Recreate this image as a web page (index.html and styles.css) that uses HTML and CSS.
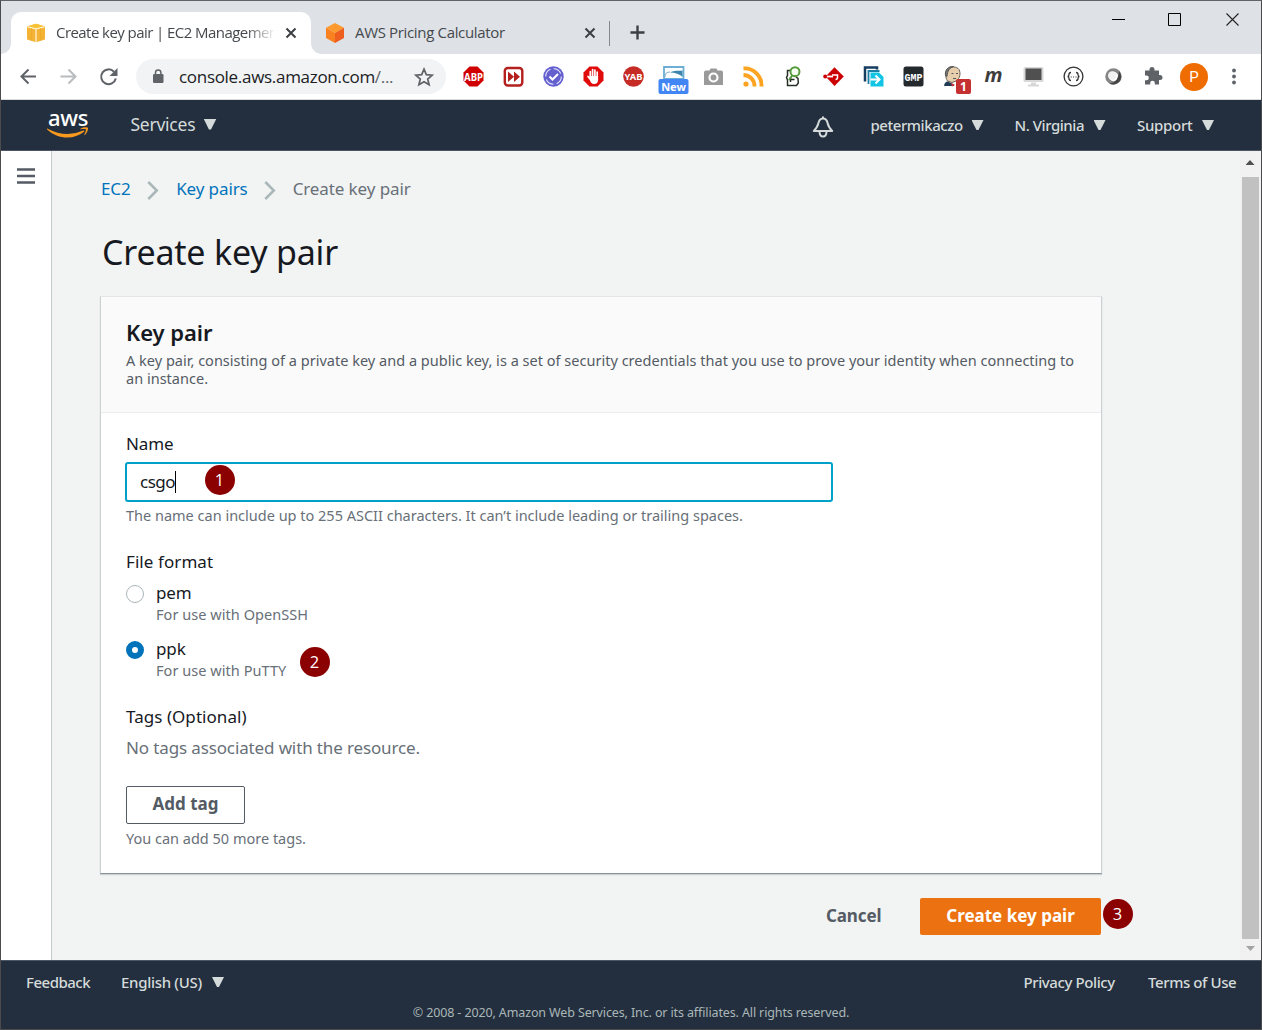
FILE: index.html
```html
<!DOCTYPE html>
<html lang="en">
<head>
<meta charset="utf-8">
<title>Create key pair | EC2 Management Console</title>
<link rel="stylesheet" href="styles.css">
</head>
<body>
<div class="window">
  <header class="tabstrip">
    <div class="tab tab-active">
      <svg class="favicon" viewBox="0 0 20 20"><path d="M1 3.500 10 .8l9 2.700v13L10 19.200l-9-2.700z" fill="#f5b335"/><path d="M1 3.500 10 .8l9 2.700-9 2.200z" fill="#f7c234"/><path d="M1.500 3.800 10 5.900l8.500-2.100M10 6v13" stroke="#fff2cf" stroke-width="1.300" fill="none"/><path d="M5.500 5.200v12.500M14.500 5.200v12.500" stroke="#eeaa29" stroke-width=".8"/></svg>
      <span class="tab-title fade">Create key pair | EC2 Management</span>
      <svg class="close" viewBox="0 0 12 12"><path d="m1.500 1.500 9 9m0-9-9 9" stroke="#3c4043" stroke-width="2"/></svg>
    </div>
    <div class="tab">
      <svg class="favicon" viewBox="0 0 20 20"><path d="m10 0 9 4.800-9 5.200L1 4.800z" fill="#ff9a2e"/><path d="m1 4.800 9 5.200v10l-9-5z" fill="#f98120"/><path d="m19 4.800-9 5.200v10l9-5z" fill="#ed5e1f"/></svg>
      <span class="tab-title">AWS Pricing Calculator</span>
      <svg class="close" viewBox="0 0 12 12"><path d="m1.500 1.500 9 9m0-9-9 9" stroke="#3c4043" stroke-width="2"/></svg>
    </div>
    <span class="tab-divider"></span>
    <svg class="new-tab" viewBox="0 0 16 16"><path d="M8 .5v15M.5 8h15" stroke="#3c4043" stroke-width="2.500"/></svg>
    <svg class="window-controls" viewBox="0 0 140 20"><path d="M5 9.500h13" stroke="#000"/><path d="M61.500 3.500h12v12h-12z" fill="none" stroke="#000"/><path d="m119.500 3.500 12 12m0-12-12 12" stroke="#222" stroke-width="1.100"/></svg>
  </header>

  <div class="toolbar">
    <svg class="nav-icons" viewBox="0 0 120 44"><g fill="none" stroke-width="2"><path d="M35 21.500H20.500m7-7-7 7 7 7" stroke="#5f6368"/><path d="M59.500 21.500h15m-7-7 7 7-7 7" stroke="#b9bbbe"/><path d="M113 16.700A7.400 7.400 0 1 0 114.800 23.500" stroke="#5f6368"/></g><path d="M116.500 13v8h-8z" fill="#5f6368"/></svg>
    <div class="omnibox">
      <svg class="lock" viewBox="0 0 12 15"><rect x="1" y="5" width="10.500" height="9" rx="1.200" fill="#5f6368"/><path d="M3.500 6V3.800a2.700 2.700 0 0 1 5.400 0V6" fill="none" stroke="#5f6368" stroke-width="1.500"/></svg>
      <span class="url">console.aws.amazon.com<span>/...</span></span>
      <svg class="star" viewBox="0 0 20 20"><path d="m10 2.200 2.300 5.400 5.900.5-4.500 3.900 1.400 5.800-5.100-3.100-5.100 3.100L6.300 12 1.800 8.100l5.900-.5z" fill="none" stroke="#5f6368" stroke-width="1.700"/></svg>
    </div>
    <div class="extensions">
      <svg viewBox="0 0 40 44"><path d="M16.500 11.500h8l6 6v8l-6 6h-8l-6-6v-8z" fill="#d00000"/><text x="20.500" y="25.500" class="x-bold" font-size="10.500" textLength="19" lengthAdjust="spacingAndGlyphs" fill="#fff">ABP</text></svg>
      <svg viewBox="0 0 40 44"><rect x="11.800" y="13" width="17.500" height="17.500" rx="3" fill="#fff" stroke="#b3201d" stroke-width="2.400"/><path d="m15 16.500 6 5.200-6 5.300zM21 16.500l6 5.200-6 5.300z" fill="#b3201d"/></svg>
      <svg viewBox="0 0 40 44"><circle cx="20.500" cy="21.500" r="10.200" fill="#6461cf"/><circle cx="20.500" cy="21.500" r="7.800" fill="none" stroke="#e5e4ff" stroke-width="1.100" stroke-dasharray="9 3.200"/><path d="m16.500 21.500 3 3 5.500-5.500" fill="none" stroke="#fff" stroke-width="2"/></svg>
      <svg viewBox="0 0 40 44"><path d="M16.500 11.500h8l6 6v8l-6 6h-8l-6-6v-8z" fill="#e00b0b"/><path d="M17.300 22v-5.500m2.300 5v-7m2.300 7v-6.500m2.300 7.500v-5.500M16.500 23.500l-1.500-2" stroke="#fff" stroke-width="1.700" stroke-linecap="round"/><path d="M16.400 21h8.700v3.500c0 3-1.500 4.500-4 4.500s-3.500-1.500-4.700-5z" fill="#fff"/></svg>
      <svg viewBox="0 0 40 44"><circle cx="20.500" cy="21.500" r="10.300" fill="#c62c25"/><text x="20.500" y="25" class="x-bold" font-size="9" textLength="18" lengthAdjust="spacingAndGlyphs" fill="#fff">YAB</text></svg>
      <svg viewBox="0 0 40 44"><path d="M11 12h19.500v12H11z" fill="#fff" stroke="#6caed5" stroke-width="1.800"/><path d="M17 17.500c4-2.500 9-1.500 12.500-2V22c-3-3-7-4.500-12.500-4.500z" fill="#3d86ae"/><path d="M12 22c0-4 2-5 5-5" fill="none" stroke="#8fb9cf" stroke-width="1.200"/><rect x="5.500" y="24" width="30" height="15" rx="2" fill="#4285f4"/><text x="20.500" y="35.800" class="x-bold" font-size="11" fill="#fff">New</text></svg>
      <svg viewBox="0 0 40 44"><path d="M13 15.500h3.500l1-2h6l1 2H28q2 0 2 2V30H11V17.500q0-2 2-2z" fill="#9a9a9a"/><circle cx="20.500" cy="22.500" r="4" fill="#9a9a9a" stroke="#fff" stroke-width="2.200"/></svg>
      <svg viewBox="0 0 40 44"><g fill="none" stroke="#fea31f" stroke-width="3.800"><path d="M10.500 20a11 11 0 0 1 11 11.500M10.500 13.500A17 17 0 0 1 28.500 31.500"/></g><circle cx="13" cy="29" r="2.600" fill="#fea31f"/></svg>
      <svg viewBox="0 0 40 44"><path d="M18 15.500h-3.500v5l-1 2 1 2.500v5.500h9l1.800-2.500-.3-4.500-2-1.500M17.500 22v5m0-2.500h4" fill="none" stroke="#263026" stroke-width="1.500"/><circle cx="22" cy="16.700" r="4.500" fill="#f4fff0" stroke="#53993a" stroke-width="1.900"/><path d="m19.500 20-3.500 5" stroke="#53993a" stroke-width="1.800"/></svg>
      <svg viewBox="0 0 40 44"><path d="m21.500 12.200 9.300 9.300-9.300 9.500-7.500-8v-3z" fill="#cc0000"/><circle cx="12.200" cy="21.500" r="2" fill="#cc0000"/><path d="M14 21.500h6" stroke="#fff" stroke-width="1.800"/><path d="M19 20h5.500v2.500q0 2-2 2" stroke="#fff" stroke-width="1.500" fill="none"/></svg>
      <svg viewBox="0 0 40 44"><path d="M12 26.500V12.500h12v2" fill="none" stroke="#153d60" stroke-width="2.500"/><path d="M15.500 29V16h11" fill="none" stroke="#1b7fa5" stroke-width="1.800"/><path d="M17.500 17.500h8.500l4.500 4.500v9.500h-13z" fill="#12c5e5"/><path d="M17.500 24.500h9m-4-4 4 4-4 4" fill="none" stroke="#fff" stroke-width="2"/></svg>
      <svg viewBox="0 0 40 44"><rect x="10.500" y="11.500" width="20" height="20" rx="2.500" fill="#24292e"/><text x="20.500" y="25.500" class="x-mono" font-size="11" textLength="18" lengthAdjust="spacingAndGlyphs" fill="#fff">GMP</text></svg>
      <svg viewBox="0 0 40 44"><path d="M14.500 26c-2-3-3-9 0-12 3.500-3 9.500-2.500 11.500.5 2 4 1 9-3 11.500l-4 1.500z" fill="#e7cfad" stroke="#6b6259" stroke-width="1"/><path d="M12.500 20.500c-1-5.500 3-9.500 8-9-4 1.500-6 4-6.500 10zM18.500 18.500h2m2.500 0h2M20 23.500h3" fill="#777" stroke="#555"/><path d="M11 31q.5-4.500 4-4.500l6 3V31z" fill="#253c59"/><path d="m18 28 4 2-3 1.500z" fill="#d33131"/><rect x="23" y="24" width="15" height="15" rx="2" fill="#c53030"/><text x="30.500" y="36" class="x-bold" font-size="12" fill="#fff">1</text></svg>
      <svg viewBox="0 0 40 44"><text x="20.500" y="26.800" class="x-bold x-italic" font-size="20" textLength="18" lengthAdjust="spacingAndGlyphs" fill="#3d3d3d">m</text></svg>
      <svg viewBox="0 0 40 44"><rect x="10.500" y="12" width="20" height="15" rx="1.500" fill="#d8d8d8"/><rect x="12.500" y="13.500" width="16" height="11.500" fill="#505050"/><path d="M18 27.500h5v2h3v2H15v-2h3z" fill="#d7d7d7"/></svg>
      <svg viewBox="0 0 40 44"><circle cx="20.500" cy="21.500" r="9.400" fill="none" stroke="#333" stroke-width="1.300"/><path d="M18 17.500q-2 0-2 2t-1.500 2q1.500 0 1.500 2t2 2m5-8q2 0 2 2t1.500 2q-1.500 0-1.500 2t-2 2" fill="none" stroke="#333" stroke-width="1.300"/><path d="M17.700 22h1m1.400 0h1m1.400 0h1" stroke="#333" stroke-width="1.100"/></svg>
      <svg viewBox="0 0 40 44"><circle cx="20.500" cy="21.500" r="6.500" fill="#fff" stroke="#858585" stroke-width="3.500"/><path d="M26 16a8 8 0 0 1-10 12.300q9 .5 10-12.300z" fill="#444"/><circle cx="19.300" cy="20.500" r="4.300" fill="#f2f2f2"/></svg>
      <svg viewBox="0 0 40 44"><path d="M12 15.500h4.500v-1a2.500 2.500 0 0 1 5 0v1H26V20h1a2.500 2.500 0 0 1 0 5h-1v4.500h-4.200V28a2.300 2.300 0 0 0-4.600 0v1.500H12v-4.300h1.500a2.300 2.300 0 0 0 0-4.600H12z" fill="#5f6368"/></svg>
    </div>
    <span class="avatar">P</span>
    <svg class="kebab" viewBox="0 0 4 18"><g fill="#5f6368"><circle cx="2" cy="2.500" r="1.900"/><circle cx="2" cy="8.500" r="1.900"/><circle cx="2" cy="14.500" r="1.900"/></g></svg>
  </div>

  <nav class="aws-nav">
    <div class="logo">
      <span>aws</span>
      <svg viewBox="0 0 42 12"><path d="M.3 1.500q18.500 10 36 2.100c1-.3 1.500.5.700 1.200C26.500 13.500 10 12 .1 2.500-.3 2 0 1.300.3 1.500z" fill="#f7981f"/><path d="M33.500 1.800c3-2.200 7-1.500 7.400-1 .7 1-.8 5.500-3 7.200-.5.400-.9 0-.5-.6 1.300-3 1.800-4.600 1.300-5.100-.5-.6-3.300-.2-4.800 0-.6 0-.7-.3-.4-.5z" fill="#f7981f"/></svg>
    </div>
    <span class="menu services">Services <i class="caret"></i></span>
    <svg class="bell" viewBox="0 0 22 22"><path d="M11 2.500V.5M11 2.500c3 0 4.200 2.300 4.800 5.200.6 3 2.200 4.800 4.400 7.300H1.800C4 12.500 5.600 10.700 6.200 7.700 6.800 4.800 8 2.500 11 2.500z" fill="none" stroke="#d5dbdb" stroke-width="2" stroke-linejoin="round"/><path d="M7.500 15.500q0 5 3.500 5t3.500-5" fill="none" stroke="#d5dbdb" stroke-width="2"/></svg>
    <span class="menu user">petermikaczo <i class="caret"></i></span>
    <span class="menu region">N. Virginia <i class="caret"></i></span>
    <span class="menu support">Support <i class="caret"></i></span>
  </nav>

  <div class="workspace">
    <aside class="rail"><svg viewBox="0 0 18 16"><path d="M0 1.500h18M0 8h18M0 14.500h18" stroke="#545b64" stroke-width="2.400"/></svg></aside>
    <main class="content">
      <div class="breadcrumb">
        <a class="bc-ec2">EC2</a>
        <svg class="chev" viewBox="0 0 12 19"><path d="m1.300 1 8.500 8.500L1.300 18" fill="none" stroke="#aab7b8" stroke-width="2.500"/></svg>
        <a class="bc-pairs">Key pairs</a>
        <svg class="chev" viewBox="0 0 12 19"><path d="m1.300 1 8.500 8.500L1.300 18" fill="none" stroke="#aab7b8" stroke-width="2.500"/></svg>
        <span>Create key pair</span>
      </div>
      <h1>Create key pair</h1>
      <section class="card">
        <header class="card-head">
          <h2>Key pair</h2>
          <p>A key pair, consisting of a private key and a public key, is a set of security credentials that you use to prove your identity when connecting to<br>an instance.</p>
        </header>
        <div class="card-body">
          <div class="label">Name</div>
          <div class="input"><span class="typed">csgo</span><span class="step step-1">1</span></div>
          <div class="hint name-hint">The name can include up to 255 ASCII characters. It can’t include leading or trailing spaces.</div>
          <div class="label format-label">File format</div>
          <div class="option">
            <span class="radio"></span>
            <div><div class="label">pem</div><div class="hint ssh">For use with OpenSSH</div></div>
          </div>
          <div class="option">
            <span class="radio checked"></span>
            <div><div class="label">ppk</div><div class="hint putty">For use with PuTTY</div></div>
            <span class="step step-2">2</span>
          </div>
          <div class="label tags-label">Tags (Optional)</div>
          <div class="empty">No tags associated with the resource.</div>
          <div class="button add">Add tag</div>
          <div class="hint more">You can add 50 more tags.</div>
        </div>
      </section>
      <div class="actions">
        <span class="cancel">Cancel</span>
        <div class="button primary">Create key pair<span class="step step-3">3</span></div>
      </div>
    </main>
    <div class="scrollbar"><i class="arrow up"></i><i class="thumb"></i><i class="arrow down"></i></div>
  </div>

  <footer class="footer">
    <div class="foot-row">
      <span class="feedback">Feedback</span>
      <span class="menu lang">English (US) <i class="caret"></i></span>
      <span class="privacy">Privacy Policy</span>
      <span class="terms">Terms of Use</span>
    </div>
    <div class="copyright">© 2008 - 2020, Amazon Web Services, Inc. or its affiliates. All rights reserved.</div>
  </footer>
</div>
</body>
</html>
```
FILE: styles.css
```css
* { box-sizing: border-box; }
body { margin: 0; font-family: "Noto Sans", sans-serif; color: #16191f; }
svg { display: block; flex: none; }
h1, h2, p { margin: 0; }
.window { width: 1262px; height: 1030px; border: 1px solid #4b4b4d; border-top-color: #626367; display: flex; flex-direction: column; overflow: hidden; white-space: nowrap; }

.tabstrip { height: 53px; background: #dee1e6; display: flex; padding: 11px 0 0 10px; flex: none; }
.tab { height: 42px; width: 300px; display: flex; align-items: center; padding-left: 15px; flex: none; }
.tab-active { background: #fff; border-radius: 10px 10px 0 0; position: relative; }
.tab-active::before, .tab-active::after { content: ""; position: absolute; bottom: 0; width: 10px; height: 10px; }
.tab-active::before { left: -10px; background: radial-gradient(circle at 0 0, transparent 9.5px, #fff 10px); }
.tab-active::after { right: -10px; background: radial-gradient(circle at 100% 0, transparent 9.5px, #fff 10px); }
.favicon { width: 20px; height: 20px; margin-right: 10px; }
.tab-title { font-family: "Open Sans", sans-serif; font-size: 15px; line-height: 20px; letter-spacing: -.34px; width: 218px; overflow: hidden; color: #45494d; margin-top: -2px; }
.tab:not(.tab-active) { width: 298px; padding-left: 14px; }
.tab:not(.tab-active) .tab-title { width: 219px; margin-right: 10px; }
.fade { letter-spacing: -.56px; margin-right: 11px; -webkit-mask-image: linear-gradient(90deg, #000 190px, transparent 220px); mask-image: linear-gradient(90deg, #000 190px, transparent 220px); }
.close { width: 12px; height: 12px; }
.tab-divider { width: 1px; height: 25px; background: #85888c; margin: 9px 20px 0 0; }
.new-tab { width: 15px; height: 15px; margin-top: 13px; }
.window-controls { width: 140px; height: 20px; margin-left: 462px; margin-top: -2px; }

.toolbar { height: 46px; background: #fff; border-bottom: 1px solid #d9dadb; display: flex; align-items: center; flex: none; }
.nav-icons { width: 120px; height: 44px; }
.omnibox { width: 310px; height: 35px; border-radius: 18px; background: #f1f3f4; margin-left: 15px; padding-left: 16px; display: flex; align-items: center; }
.lock { width: 12px; height: 15px; }
.url { font-family: "Open Sans", sans-serif; font-size: 17px; letter-spacing: -.3px; margin-left: 15px; width: 235px; color: #202124; }
.url span { color: #5f6368; }
.star { width: 20px; height: 20px; }
.extensions { display: flex; margin-left: 7px; }
.extensions svg { width: 40px; height: 44px; }
.extensions text { text-anchor: middle; }
.x-bold { font-family: "Noto Sans", sans-serif; font-weight: 700; }
.x-mono { font-family: "Liberation Mono", monospace; font-weight: 700; }
.x-italic { font-style: italic; }
.avatar { width: 28px; height: 28px; border-radius: 50%; background: #ef6c00; color: #fff; font: 15px/28px Roboto, sans-serif; text-align: center; margin-left: 7px; }
.kebab { width: 4px; height: 18px; margin-left: 23.5px; }

.aws-nav { height: 51px; background: #232f3e; border-bottom: 1px solid #4b5563; display: flex; align-items: center; color: #d5dbdb; flex: none; }
.logo { width: 42px; margin-left: 46px; height: 28px; color: #fff; }
.logo span { display: block; font-size: 22px; line-height: 18px; height: 16px; text-align: center; font-weight: 500; letter-spacing: -.3px; margin-top: -3px; }
.logo svg { width: 42px; height: 12px; margin-top: 3px; }
.menu { display: flex; align-items: center; justify-content: space-between; font-size: 15px; font-weight: 500; letter-spacing: -.45px; flex: none; }
.caret { width: 12px; height: 10px; background: #d5dbdb; clip-path: polygon(0 0, 100% 0, 58% 100%, 42% 100%); }
.services { font-size: 17.500px; font-weight: 400; width: 86px; margin-left: 41.5px; letter-spacing: -.25px; margin-top: -2px; }
.services .caret { width: 13px; height: 11px; }
.bell { width: 22px; height: 22px; margin-left: 595px; margin-top: 3px; }
.user { width: 113px; margin-left: 37px; }
.region { width: 91px; margin-left: 31px; }
.support { width: 77px; margin-left: 31.5px; letter-spacing: -.3px; }

.workspace { height: 809px; display: flex; background: #f2f3f3; flex: none; }
.rail { width: 51px; background: #fff; border-right: 1px solid #c6cbcc; padding: 17px 0 0 16px; flex: none; }
.rail svg { width: 18px; height: 16px; }
.content { width: 1188px; padding: 27px 0 0 49px; flex: none; }
.breadcrumb { height: 22px; display: flex; align-items: center; font-size: 17px; line-height: 22px; color: #687078; letter-spacing: -.1px; }
.breadcrumb a { color: #0073bb; }
.chev { width: 12px; height: 19px; margin: 2px 17px 0 16.500px; }
.bc-pairs { width: 71px; }
h1 { font-size: 34px; line-height: 40px; font-weight: 400; margin: 32px 0 0 1px; letter-spacing: -.2px; }
.card { width: 1002px; height: 578px; margin: 24px 0 0 -1px; background: #fff; border: 1px solid #e2e6e6; border-left-color: #ccd1d1; border-right-color: #ccd1d1; border-bottom-color: #879596; box-shadow: 0 1px 1px rgba(0,28,36,.16); }
.card-head { height: 116px; background: #fafafa; border-bottom: 1px solid #eaeded; padding: 22px 0 0 25px; }
h2 { font-size: 22px; line-height: 26px; font-weight: 600; letter-spacing: -.05px; }
.card-head p { font-size: 14.500px; line-height: 18px; margin-top: 6px; color: #545b64; letter-spacing: .015px; }
.card-body { padding: 20px 0 0 25px; }
.label { font-size: 17px; line-height: 22px; letter-spacing: -.1px; }
.input { position: relative; width: 708px; height: 40px; margin: 7px 0 0 -1px; border: 2px solid #00a1c9; border-radius: 3px; padding: 7px 0 0 13px; }
.typed { display: inline-block; height: 22px; border-right: 1px solid #000; font-size: 17px; line-height: 22px; letter-spacing: -.5px; }
.step { position: absolute; width: 30px; height: 30px; border-radius: 50%; background: #8b0000; color: #fff; font: 400 16.500px/29px "Open Sans", sans-serif; letter-spacing: 0; text-align: center; }
.step-1 { left: 77.5px; top: .5px; }
.hint { font-size: 14.500px; line-height: 18px; color: #687078; }
.name-hint { margin-top: 4px; }
.label.format-label { margin: 27px 0 9px; letter-spacing: .08px; }
.option { display: flex; gap: 12px; height: 42px; margin-bottom: 14px; position: relative; }
.option .hint { margin-top: 1px; letter-spacing: .05px; }
.radio { width: 18px; height: 18px; margin-top: 3px; border: 1px solid #aab7b8; border-radius: 50%; }
.radio.checked { border: 6px solid #0073bb; margin-top: 2.5px; }
.step-2 { left: 173.5px; top: 8.500px; }
.label.tags-label { margin-top: 26px; letter-spacing: .05px; }
.empty { font-size: 17px; line-height: 22px; margin-top: 9px; color: #687078; letter-spacing: -.13px; }
.button { font-size: 17px; font-weight: 700; border-radius: 2px; text-align: center; }
.add { width: 119px; height: 38px; border: 1px solid #545b64; color: #545b64; line-height: 34px; margin-top: 27px; }
.more { margin-top: 5px; }
.actions { width: 1000px; display: flex; justify-content: flex-end; align-items: center; margin-top: 24px; }
.cancel { font-size: 17px; line-height: 24px; font-weight: 700; color: #545b64; margin: -2px 38.500px 0 0; letter-spacing: -.1px; }
.primary { position: relative; width: 181px; height: 37px; line-height: 35px; background: #ec7211; color: #fff; }
.step-3 { left: 182.5px; top: .5px; }
.scrollbar { width: 20px; background: #f1f1f1; display: flex; flex-direction: column; align-items: center; padding-top: 9px; }
.arrow { width: 9px; height: 5px; background: #505050; clip-path: polygon(50% 0, 100% 100%, 0 100%); }
.thumb { width: 17px; height: 762px; margin: 12px 0 7px; background: #c1c1c1; }
.down { background: #a3a3a3; transform: rotate(180deg); }

.footer { height: 69px; background: #232f3e; border-top: 1px solid #4b5563; color: #d5dbdb; flex: none; }
.foot-row { display: flex; font-size: 15px; line-height: 20px; padding: 11px 0 0 25px; font-weight: 500; letter-spacing: -.4px; }
.feedback { width: 64px; letter-spacing: -.5px; }
.lang { margin-left: 31px; width: 103px; letter-spacing: -.3px; }
.privacy { margin-left: 799.5px; width: 93px; }
.terms { margin-left: 31.5px; }
.copyright { text-align: center; font-size: 12.500px; line-height: 18px; margin-top: 12px; color: #aab7b8; letter-spacing: -.125px; }
```
